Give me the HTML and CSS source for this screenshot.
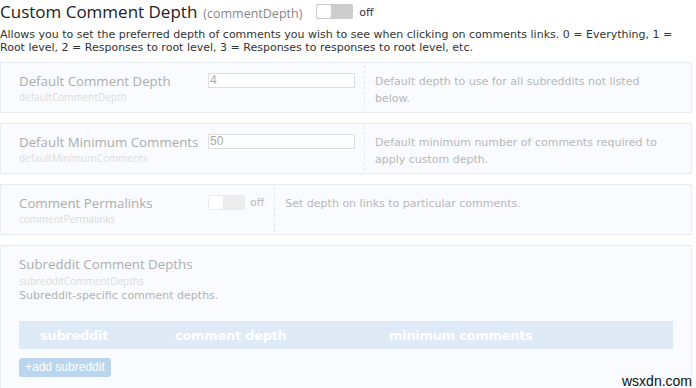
FILE: index.html
```html
<!DOCTYPE html>
<html>
<head>
<meta charset="utf-8">
<link rel="stylesheet" href="styles.css">
</head>
<body>
<div class="page">
  <div class="head">
    <span class="title">Custom Comment Depth</span>
    <span class="key">(commentDepth)</span>
    <span class="toggle main"><span class="knob"></span></span>
    <span class="off">off</span>
  </div>
  <p class="intro">Allows you to set the preferred depth of comments you wish to see when clicking on comments links. 0 = Everything, 1 = Root level, 2 = Responses to root level, 3 = Responses to responses to root level, etc.</p>

  <div class="opt">
    <div class="lab"><div class="name">Default Comment Depth</div><div class="sub">defaultCommentDepth</div></div>
    <div class="ctl"><div class="input">4</div></div>
    <div class="desc">Default depth to use for all subreddits not listed below.</div>
  </div>

  <div class="opt">
    <div class="lab"><div class="name">Default Minimum Comments</div><div class="sub">defaultMinimumComments</div></div>
    <div class="ctl"><div class="input">50</div></div>
    <div class="desc">Default minimum number of comments required to apply custom depth.</div>
  </div>

  <div class="opt">
    <div class="lab"><div class="name">Comment Permalinks</div><div class="sub">commentPermalinks</div></div>
    <div class="ctl ctl-toggle"><span class="toggle faded"><span class="knob"></span></span><span class="off faded-off">off</span></div>
    <div class="desc">Set depth on links to particular comments.</div>
  </div>

  <div class="opt opt-table">
    <div class="name tname">Subreddit Comment Depths</div>
    <div class="sub tsub">subredditCommentDepths</div>
    <div class="tdesc">Subreddit-specific comment depths.</div>
    <div class="thead">
      <span class="th c1">subreddit</span>
      <span class="th c2">comment depth</span>
      <span class="th c3">minimum comments</span>
    </div>
    <div class="addbtn">+add subreddit</div>
  </div>
</div>
<div class="wm">wsxdn.com</div>
</body>
</html>
```
FILE: styles.css
```css
html, body { margin: 0; padding: 0; background: #fff; }
body { width: 696px; height: 388px; overflow: hidden; position: relative; font-family: "DejaVu Sans", Verdana, sans-serif; }
.page { width: 692px; }
.head { display: flex; align-items: center; height: 24px; }
.title { font-family: "Open Sans", "DejaVu Sans", sans-serif; font-size: 17px; color: #222; line-height: 24px; }
.key { font-family: "Open Sans", sans-serif; font-size: 12.5px; color: #888; margin-left: 6px; margin-top: 3px; }
.toggle { display: inline-flex; width: 37px; height: 15px; background: #ccc; border-radius: 2px; box-sizing: border-box; padding: 1px; }
.toggle .knob { width: 14px; height: 13px; background: #fff; border-radius: 2px; }
.main { margin-left: 14px; margin-top: -1px; }
.off { font-size: 11px; color: #333; margin-left: 6px; }
.intro { margin: 4px 0 0 0; font-size: 11px; line-height: 13px; color: #333; width: 692px; }

.opt { display: flex; margin-top: 10px; background: #f9fbfe; border: 1px solid #e8edf4; height: 49px; padding: 0 0 0 18px; }
.intro + .opt { margin-top: 8px; }
.lab { width: 189px; padding-top: 10px; }
.name { font-family: "Open Sans", "DejaVu Sans", sans-serif; font-size: 13.3px; line-height: 17px; color: #adadad; white-space: nowrap; }
.sub { font-family: "Open Sans", sans-serif; font-size: 10px; line-height: 15px; color: #dcdcdc; }
.ctl { padding-top: 10px; margin-right: 9px; }
.input { width: 147px; height: 15px; box-sizing: border-box; border: 1px solid #dedede; background: #fff; font-family: "Liberation Sans", Arial, sans-serif; font-size: 12px; line-height: 13px; color: #aaa; padding-left: 1px; }
.ctl-toggle { display: flex; align-items: flex-start; padding-top: 10px; margin-right: 10px; }
.faded { background: #ececec; }
.faded-off { color: #bbb; margin-left: 5px; line-height: 15px; }
.desc { border-left: 1px dashed #e2e6ec; margin: 2px 0; padding: 8px 30px 0 10px; font-size: 11px; line-height: 17px; color: #b8b8b8; flex: 1; }

.opt-table { display: block; height: 150px; padding-top: 9px; }
.tname { line-height: 18px; }
.tsub { line-height: 16px; }
.tdesc { font-size: 11px; line-height: 14px; color: #b3b3b3; }
.thead { display: flex; margin-top: 18px; width: 654px; height: 28px; background: #deebf7; align-items: center; }
.th { font-family: "DejaVu Sans", Verdana, sans-serif; font-weight: bold; font-size: 13px; color: #fff; letter-spacing: -0.3px; }
.c1 { padding-left: 21px; width: 135px; }
.c2 { width: 214px; }
.addbtn { display: inline-block; margin-top: 9px; background: #b9d6ee; color: #fff; font-family: "Liberation Sans", Arial, sans-serif; font-size: 12px; line-height: 19px; padding: 0 6px; border-radius: 3px; }
.wm { position: absolute; left: 622px; top: 373px; font-family: "Liberation Sans", Arial, sans-serif; font-size: 14px; color: #111; }
```
